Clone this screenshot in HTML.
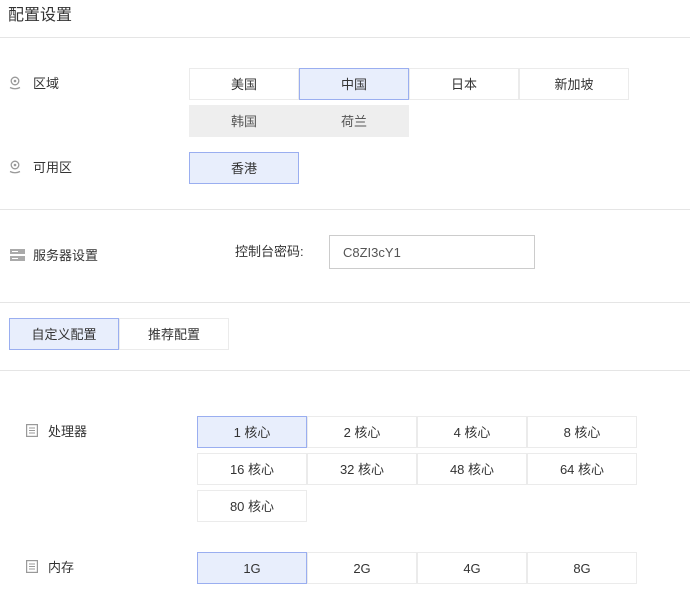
<!DOCTYPE html>
<html><head><meta charset="utf-8"><style>
*{margin:0;padding:0;box-sizing:border-box}
body{width:690px;height:590px;background:#fff;font-family:"Liberation Sans","Noto Sans CJK SC",sans-serif;color:#333;font-size:13px;position:relative;overflow:hidden}
.a{position:absolute}
.line{position:absolute;left:0;width:690px;height:1px;background:#e5e5e5}
.b{position:absolute;width:110px;height:32px;border:1px solid #ebebeb;background:#fff;text-align:center;line-height:32px;font-size:13px}
.s{background:#e8eefc;border-color:#9aaef0;z-index:2}
.g{background:#eee;border-color:#eee;color:#555}
.lbl{position:absolute;font-size:13px;line-height:16px}
svg{position:absolute}
</style></head><body>
<div class="a" style="left:8px;top:6px;font-size:16px;line-height:20px;color:#333">配置设置</div>
<div class="line" style="top:37px"></div>

<svg style="left:9px;top:76px" width="12" height="14" viewBox="0 0 12 14"><circle cx="6" cy="5" r="3.8" fill="none" stroke="#999" stroke-width="1.3"/><circle cx="6" cy="5" r="1.3" fill="#999"/><path d="M1 11.5 Q6 14 11 11.5" fill="none" stroke="#999" stroke-width="1.3"/></svg>
<div class="lbl" style="left:33px;top:76px">区域</div>
<div class="b" style="left:189px;top:68px">美国</div>
<div class="b s" style="left:299px;top:68px">中国</div>
<div class="b" style="left:409px;top:68px">日本</div>
<div class="b" style="left:519px;top:68px">新加坡</div>
<div class="b g" style="left:189px;top:105px">韩国</div>
<div class="b g" style="left:299px;top:105px">荷兰</div>

<svg style="left:9px;top:160px" width="12" height="14" viewBox="0 0 12 14"><circle cx="6" cy="5" r="3.8" fill="none" stroke="#999" stroke-width="1.3"/><circle cx="6" cy="5" r="1.3" fill="#999"/><path d="M1 11.5 Q6 14 11 11.5" fill="none" stroke="#999" stroke-width="1.3"/></svg>
<div class="lbl" style="left:33px;top:160px">可用区</div>
<div class="b s" style="left:189px;top:152px">香港</div>
<div class="line" style="top:209px"></div>

<svg style="left:10px;top:249px" width="15" height="12" viewBox="0 0 15 12"><rect x="0" y="0" width="15" height="5" fill="#aaa"/><rect x="0" y="7" width="15" height="5" fill="#aaa"/><rect x="2" y="2" width="6" height="1" fill="#fff"/><rect x="2" y="9" width="6" height="1" fill="#fff"/></svg>
<div class="lbl" style="left:33px;top:248px">服务器设置</div>
<div class="lbl" style="left:235px;top:244px">控制台密码:</div>
<div class="a" style="left:329px;top:235px;width:206px;height:34px;border:1px solid #ccc;padding-left:13px;line-height:34px;color:#555;font-size:13px">C8ZI3cY1</div>
<div class="line" style="top:302px"></div>

<div class="b s" style="left:9px;top:318px">自定义配置</div>
<div class="b" style="left:119px;top:318px">推荐配置</div>
<div class="line" style="top:370px"></div>

<svg style="left:26px;top:424px" width="12" height="13" viewBox="0 0 12 13"><rect x="0.6" y="0.6" width="10.8" height="11.8" fill="none" stroke="#999" stroke-width="1.2"/><path d="M3 4h6M3 6.5h6M3 9h6" stroke="#999" stroke-width="1"/></svg>
<div class="lbl" style="left:48px;top:424px">处理器</div>
<div class="b s" style="left:197px;top:416px">1 核心</div>
<div class="b" style="left:307px;top:416px">2 核心</div>
<div class="b" style="left:417px;top:416px">4 核心</div>
<div class="b" style="left:527px;top:416px">8 核心</div>
<div class="b" style="left:197px;top:453px">16 核心</div>
<div class="b" style="left:307px;top:453px">32 核心</div>
<div class="b" style="left:417px;top:453px">48 核心</div>
<div class="b" style="left:527px;top:453px">64 核心</div>
<div class="b" style="left:197px;top:490px">80 核心</div>

<svg style="left:26px;top:560px" width="12" height="13" viewBox="0 0 12 13"><rect x="0.6" y="0.6" width="10.8" height="11.8" fill="none" stroke="#999" stroke-width="1.2"/><path d="M3 4h6M3 6.5h6M3 9h6" stroke="#999" stroke-width="1"/></svg>
<div class="lbl" style="left:48px;top:560px">内存</div>
<div class="b s" style="left:197px;top:552px">1G</div>
<div class="b" style="left:307px;top:552px">2G</div>
<div class="b" style="left:417px;top:552px">4G</div>
<div class="b" style="left:527px;top:552px">8G</div>
</body></html>
